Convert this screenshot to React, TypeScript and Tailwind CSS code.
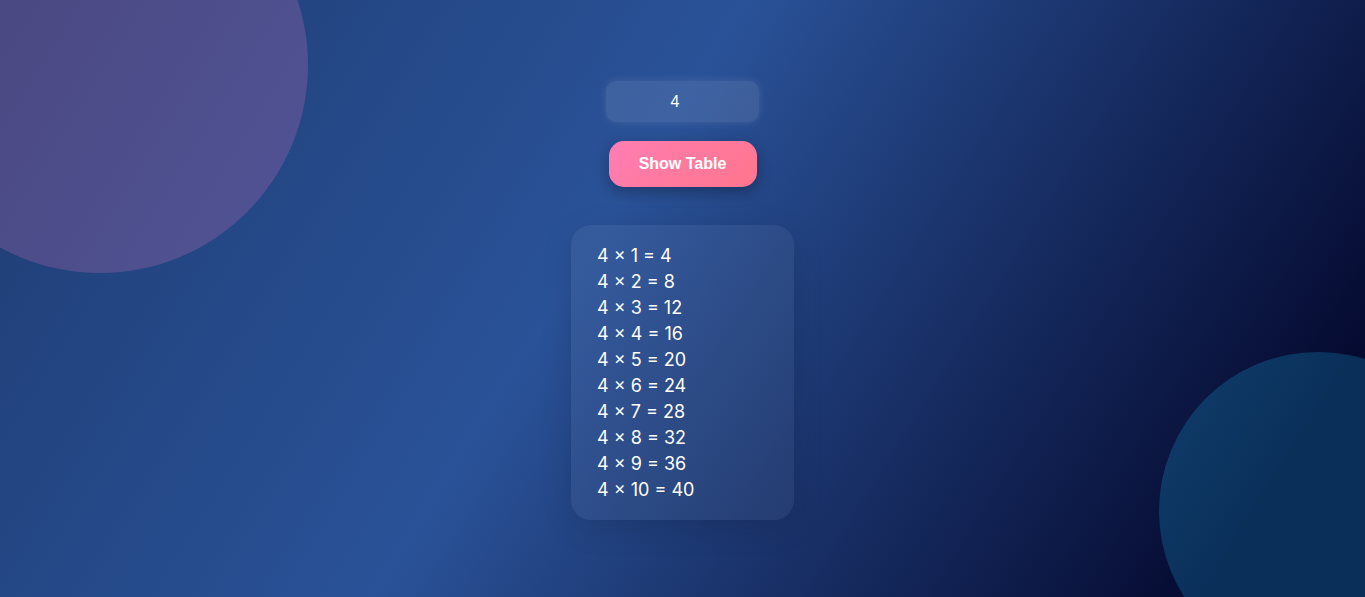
import React, { useState } from "react";

export default function App() {
  const [num, setNum] = useState("4");
  const [table, setTable] = useState<number>(4);

  const rows = Array.from({ length: 10 }, (_, i) => i + 1);

  return (
    <div className="relative min-h-[597px] w-full overflow-hidden bg-[linear-gradient(122deg,#1e3c72_0%,#2a5298_43%,#050a30_91%)]">
      {/* decorative circles */}
      <div className="absolute left-[-108px] top-[-143px] h-[416px] w-[416px] rounded-full bg-[rgba(255,126,200,0.2)]" />
      <div className="absolute left-[1159px] top-[352px] h-[318px] w-[318px] rounded-full bg-[rgba(30,200,255,0.2)]" />

      <div className="relative flex flex-col items-center pt-[81px]">
        <input
          type="number"
          value={num}
          onChange={(e) => setNum(e.target.value)}
          className="h-[41px] w-[153px] rounded-[10px] bg-white/10 px-3 text-center text-[16px] text-white shadow-[0_0_8px_rgba(255,255,255,0.12)] outline-none [font-family:'Liberation_Sans',Arial,sans-serif]"
        />
        <button
          onClick={() => setTable(Number(num) || 0)}
          className="mt-[19px] h-[46px] w-[148px] rounded-[15px] bg-[linear-gradient(135deg,#ff7eb3,#ff758c)] text-[16px] font-bold text-white shadow-[0_5px_15px_rgba(0,0,0,0.3)] [font-family:'Liberation_Sans',Arial,sans-serif]"
        >
          Show Table
        </button>

        <div className="mt-[38px] w-[223px] rounded-[20px] bg-white/5 px-[26px] pb-[17px] pt-[18px] shadow-[0_8px_32px_rgba(0,0,0,0.12)]">
          {rows.map((i) => (
            <p
              key={i}
              className="text-[18px] leading-[26px] text-white [font-family:Inter,'Noto_Sans',sans-serif]"
            >
              {table} × {i} = {table * i}
            </p>
          ))}
        </div>
      </div>
    </div>
  );
}
